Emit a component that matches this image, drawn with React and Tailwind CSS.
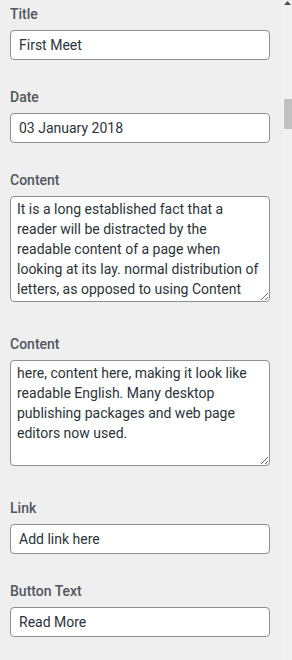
const font = { fontFamily: "Roboto, 'Noto Sans', sans-serif" };

function Field({ label, children, tall }) {
  return (
    <div className={tall ? "mb-[32px]" : "mb-[27px]"}>
      <label className="block text-[14px] leading-[20px] font-medium text-[#50575e] mb-[6px]">
        {label}
      </label>
      {children}
    </div>
  );
}

function TextInput({ value }) {
  return (
    <input
      type="text"
      defaultValue={value}
      className="block w-full h-[30px] px-[8px] rounded-[4px] border border-[#8c8f94] bg-white text-[14px] text-[#2c3338] outline-none"
    />
  );
}

function TextArea({ value }) {
  return (
    <textarea
      defaultValue={value}
      className="block w-full h-[106px] px-[6px] py-[2px] rounded-[4px] border border-[#8c8f94] bg-white text-[14px] leading-[20px] text-[#2c3338] outline-none overflow-hidden"
    />
  );
}

export default function App() {
  return (
    <div className="flex w-[292px] h-[660px] bg-[#efefef] overflow-hidden" style={font}>
      <div className="w-[282px] pt-[4px] pl-[10px] pr-[12px]">
        <Field label="Title">
          <TextInput value="First Meet" />
        </Field>
        <Field label="Date">
          <TextInput value="03 January 2018" />
        </Field>
        <Field label="Content" tall>
          <TextArea value="It is a long established fact that a reader will be distracted by the readable content of a page when looking at its lay. normal distribution of letters, as opposed to using Content" />
        </Field>
        <Field label="Content" tall>
          <TextArea value="here, content here, making it look like readable English. Many desktop publishing packages and web page editors now used." />
        </Field>
        <Field label="Link">
          <TextInput value="Add link here" />
        </Field>
        <Field label="Button Text">
          <TextInput value="Read More" />
        </Field>
      </div>
      {/* scrollbar */}
      <div className="w-[10px] bg-[#f1f1f1] flex flex-col">
        <div className="h-[8px] flex justify-end pr-[1px] pt-[1px]">
          <svg width="7" height="5" viewBox="0 0 7 5">
            <path d="M3.5 0 L7 4 L0 4 Z" fill="#505050" />
          </svg>
        </div>
        <div className="mt-[91px] ml-[2px] h-[30px] bg-[#c1c1c1]" />
      </div>
    </div>
  );
}
